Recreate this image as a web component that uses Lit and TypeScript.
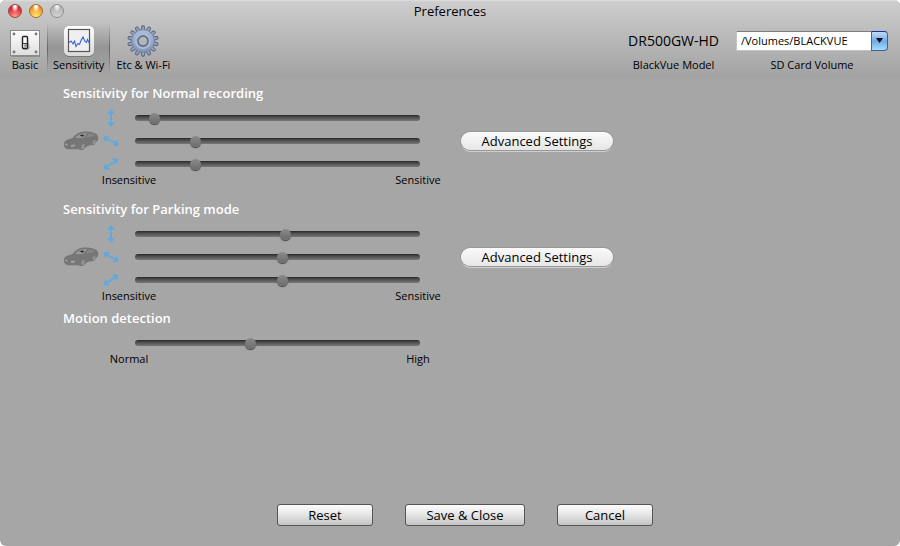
import { LitElement, html, css, svg } from "lit";
import { customElement, property } from "lit/decorators.js";

const switchIcon = svg`
  <svg class="icon" viewBox="0 0 32 32" aria-hidden="true">
    <defs>
      <linearGradient id="plate" x1="0" y1="0" x2="0" y2="1">
        <stop offset="0" stop-color="#fdfdfd" /><stop offset="1" stop-color="#dedede" />
      </linearGradient>
    </defs>
    <rect x="2" y="6" width="29" height="26" fill="#777" opacity=".6" />
    <rect x="1.5" y="5.5" width="29" height="25" fill="url(#plate)" stroke="#8a8a8a" />
    <g fill="#777">
      <circle cx="5" cy="9" r="1.4" /><circle cx="27" cy="9" r="1.4" />
      <circle cx="5" cy="27" r="1.4" /><circle cx="27" cy="27" r="1.4" />
    </g>
    <path d="M18 13l3 10-2 2h-5z" fill="#9a9a9a" opacity=".7" />
    <rect x="13.5" y="11.500" width="5" height="12" rx="1" fill="#fff" stroke="#222" stroke-width="1.4" />
    <path d="M15.500 18.500h2.500v4h-3z" fill="#999" />
    <path d="M14 18.500h4" stroke="#444" />
  </svg>`;

const chartIcon = svg`
  <svg class="icon" viewBox="0 0 32 32" aria-hidden="true">
    <defs>
      <linearGradient id="tile" x1="0" y1="0" x2="0" y2="1">
        <stop offset="0" stop-color="#ffffff" /><stop offset="1" stop-color="#d9d9d9" />
      </linearGradient>
    </defs>
    <rect x="1" y="2" width="30" height="30" rx="5" fill="#555" opacity=".5" />
    <rect x="1" y="1" width="30" height="30" rx="5" fill="url(#tile)" />
    <rect x="5.5" y="4.5" width="21" height="22" fill="#f0f0f2" stroke="#555" stroke-width="1.2" />
    <path d="M6 17.500l2-1.500 2 3 1.500-3L13 21.500l2-3 1.500 1 1.500-4 2-3.500 2 4.500 1.500 1 1-3 2 4"
      fill="none" stroke="#3b62dc" stroke-width="1.100" />
  </svg>`;

const teeth = Array.from({ length: 14 }, (_, i) => (i * 360) / 14);
const gearIcon = svg`
  <svg class="icon" viewBox="0 0 32 32" aria-hidden="true">
    <defs>
      <linearGradient id="steel" x1="0" y1="0" x2="0" y2="1">
        <stop offset="0" stop-color="#aebcd6" /><stop offset="1" stop-color="#8496b8" />
      </linearGradient>
    </defs>
    <g fill="#8f9fbd" stroke="#4c5a75" stroke-width=".8">
      ${teeth.map((a) => svg`<path d="M14 6l.8-5.200h2.400l.8 5.200z" transform="rotate(${a} 16 16)" />`)}
    </g>
    <circle cx="16" cy="16" r="11.200" fill="url(#steel)" stroke="#6d7d9c" stroke-width=".6" />
    <circle cx="16" cy="16" r="7.200" fill="none" stroke="#a9bad8" stroke-width="2" />
    <circle cx="16" cy="16" r="5" fill="#b5b5b5" stroke="#56657f" stroke-width="1.300" />
  </svg>`;

const carIcon = svg`
  <svg class="car" viewBox="0 0 36 20" aria-hidden="true">
    <path d="M1 14.500C.5 12 1.500 10 3.500 9l6-2C12 3.500 15 1.500 18 1c5-.8 9-.6 12 .5 3 .8 5 2.500 5.300 5 .2 2-.8 3.500-2.300 4.500l-2 3-3 .3-3.500 .8-2.500 2-2 2h-3l-1.500-.8L5 18.200c-2.500-.3-3.700-1.500-4-3.700z" fill="#767676" />
    <path d="M12 6.800C14 4.200 16.500 3 19 2.400l5-.3-3.500 4.700c-2.500.3-6 .6-8.500 0z" fill="#989898" />
    <path d="M22.500 6.500l2.800-4c2.500-.1 5 .5 6.500 1.700L30 5.500z" fill="#858585" />
    <path d="M16.500 4.200l3-.8 1.800 1-2 1.400z" fill="#2e2e2e" />
    <path d="M2 12.500l2 .4 1 1.600-3-.4zM8 14l4.500-.5-1 2-3.500.4z" fill="#a2a2a2" />
    <ellipse cx="20" cy="15.500" rx="1.600" ry="2.800" fill="#929292" transform="rotate(20 20 15.500)" />
    <ellipse cx="31" cy="11" rx="1.300" ry="2.400" fill="#929292" transform="rotate(20 31 11)" />
  </svg>`;

const arrowIcon = (angle: number) => svg`
  <svg class="arrow" viewBox="0 0 18 18" aria-hidden="true">
    <path d="M9 2v14M6 4.800L9 1.500l3 3.300M6 13.200l3 3.300 3-3.300" transform="rotate(${angle} 9 9)"
      fill="none" stroke="#5aa9e2" stroke-width="1.600" />
  </svg>`;

interface Axis {
  name: string;
  angle: number;
  value: number;
}

@customElement("sensitivity-group")
export class SensitivityGroup extends LitElement {
  @property() heading = "";
  @property() low = "";
  @property() high = "";
  @property({ type: Boolean }) advanced = false;
  @property({ attribute: false }) axes: Axis[] = [];

  static styles = css`
    :host {
      display: block;
    }
    .heading {
      margin: 0;
      font-size: 13px;
      line-height: 16px;
      font-weight: 600;
      color: #fff;
    }
    .body {
      display: grid;
      grid-template-columns: 36px minmax(180px, 321px) 193px;
      align-items: center;
      padding-top: 7px;
    }
    .car {
      display: block;
      width: 36px;
      height: 20px;
    }
    .rows {
      display: flex;
      flex-direction: column;
      gap: 4px;
    }
    .row {
      display: flex;
      align-items: center;
      height: 19px;
    }
    .mark {
      flex: none;
      display: flex;
      justify-content: center;
      width: 24px;
      margin-right: 12px;
    }
    .arrow {
      width: 18px;
      height: 18px;
    }
    .slider {
      appearance: none;
      flex: 1;
      min-width: 0;
      height: 12px;
      margin: 0;
      background: transparent;
    }
    .slider::-webkit-slider-runnable-track {
      height: 6px;
      border-radius: 3px;
      background: linear-gradient(#262626, #4c4c4c 35%, #787878);
    }
    .slider::-webkit-slider-thumb {
      appearance: none;
      width: 11px;
      height: 11px;
      margin-top: -2px;
      border-radius: 50%;
      background: linear-gradient(#8a8a8a, #6c6c6c);
      box-shadow: 0 1px 1px #444;
    }
    .advanced {
      justify-self: end;
      width: 152px;
      height: 18px;
      padding: 0;
      border: 0;
      border-radius: 9px;
      background: linear-gradient(#fafafa, #e6e6e6);
      box-shadow: 0 0 0 1px #989898, 0 2px 0 #cfcfcf;
      font: inherit;
      font-size: 13px;
      line-height: 18px;
      color: #000;
    }
    .scale {
      display: flex;
      justify-content: space-between;
      max-width: 347px;
      margin-top: 1px;
      padding-left: 37px;
      font-size: 11px;
      line-height: 12px;
    }
    .end {
      width: 58px;
      text-align: center;
    }
  `;

  render() {
    return html`
      <h2 class="heading">${this.heading}</h2>
      <div class="body">
        <div>${this.advanced ? carIcon : ""}</div>
        <div class="rows">
          ${this.axes.map(
            (axis) => html`<label class="row">
              <span class="mark">${this.advanced ? arrowIcon(axis.angle) : ""}</span>
              <input class="slider" type="range" min="0" max="1000" aria-label=${axis.name} .value=${String(axis.value)} />
            </label>`
          )}
        </div>
        ${this.advanced ? html`<button class="advanced" type="button">Advanced Settings</button>` : ""}
      </div>
      <div class="scale"><span class="end">${this.low}</span><span class="end">${this.high}</span></div>
    `;
  }
}

@customElement("app-root")
export class AppRoot extends LitElement {
  static styles = css`
    :host {
      display: flex;
      flex-direction: column;
      box-sizing: border-box;
      min-height: 100vh;
      border-radius: 6px;
      background: #a6a6a6;
      color: #000;
      font-family: "Open Sans", "Noto Sans", sans-serif;
      font-size: 13px;
    }
    .header {
      border-radius: 6px 6px 0 0;
      background: linear-gradient(#dedede, #cdcdcd 2px, #a3a3a3 76px, #a6a6a6);
    }
    .titlebar {
      display: grid;
      grid-template-columns: 72px 1fr 72px;
      align-items: center;
      height: 22px;
    }
    .lights {
      display: flex;
      gap: 7px;
      padding-left: 8px;
    }
    .light {
      width: 14px;
      height: 14px;
      padding: 0;
      border: 1px solid #8f8f8f;
      border-radius: 50%;
      background: radial-gradient(ellipse at 50% 10%, #f4f4f4 8%, transparent 40%), linear-gradient(#a8a8a8, #d4d4d4);
    }
    .close {
      border-color: #9b4343;
      background: radial-gradient(ellipse at 50% 8%, #fff 10%, transparent 42%), radial-gradient(circle at 50% 100%, #ffa8a0, #e33437 60%, #b01a20);
    }
    .minimize {
      border-color: #a66a2c;
      background: radial-gradient(ellipse at 50% 8%, #fff 10%, transparent 42%), radial-gradient(circle at 50% 100%, #fff07c, #f3a32f 60%, #c56a18);
    }
    .title {
      margin: 0;
      font-size: 13px;
      line-height: 22px;
      font-weight: 400;
      text-align: center;
    }
    .toolbar {
      display: flex;
      justify-content: space-between;
      align-items: flex-start;
      height: 58px;
      padding: 0 12px 0 3px;
    }
    .tabs {
      display: flex;
    }
    .tab {
      display: flex;
      flex-direction: column;
      align-items: center;
      height: 52px;
      padding: 3px 6px 0;
      border: 0;
      background: none;
      font: inherit;
      font-size: 11px;
      line-height: 16px;
      color: #000;
      white-space: nowrap;
    }
    .selected {
      background:
        linear-gradient(transparent, #0005 50%, transparent) left / 1px 100% no-repeat,
        linear-gradient(transparent, #0005 50%, transparent) right / 1px 100% no-repeat,
        linear-gradient(transparent, #0000002b 50%, transparent);
    }
    .icon {
      width: 32px;
      height: 32px;
    }
    .status {
      display: flex;
      gap: 17px;
      padding-top: 9px;
    }
    .field {
      display: flex;
      flex-direction: column;
      align-items: center;
      gap: 7px;
      font-size: 11px;
      line-height: 14px;
    }
    .model {
      font-size: 14px;
      line-height: 20px;
    }
    .combo {
      position: relative;
      display: block;
      width: 152px;
      height: 20px;
    }
    .volume {
      appearance: none;
      width: 100%;
      height: 20px;
      padding: 0 20px 0 4px;
      border: 1px solid #c4c4c4;
      border-top-color: #7d7d7d;
      border-radius: 0 4px 4px 0;
      background: #fff;
      color: #000;
      font: inherit;
      font-size: 11px;
    }
    .drop {
      position: absolute;
      top: 0;
      right: 0;
      box-sizing: border-box;
      width: 17px;
      height: 20px;
      border: 1px solid #3d5fa8;
      border-top-color: #20309a;
      border-radius: 0 4px 4px 0;
      background: linear-gradient(#c4dcf6, #6fa9e8 50%, #a8dcfa);
      pointer-events: none;
    }
    .content {
      flex: 1;
      display: flex;
      flex-direction: column;
      padding: 5px 63px 0;
    }
    .parking {
      margin-top: 15px;
    }
    .motion {
      margin-top: 8px;
    }
    .actions {
      display: flex;
      justify-content: center;
      gap: 32px;
      padding: 20px 0 20px 30px;
    }
    .action {
      box-sizing: border-box;
      width: 96px;
      height: 22px;
      padding: 0;
      border: 1px solid #555;
      border-radius: 3px;
      background: linear-gradient(#fdfdfd, #e4e4e4 50%, #c4c4c4);
      font: inherit;
      font-size: 13px;
      line-height: 20px;
      color: #000;
    }
    .wide {
      width: 120px;
    }
  `;

  private normal: Axis[] = [
    { name: "Vertical", angle: 0, value: 51 },
    { name: "Lateral", angle: -62, value: 202 },
    { name: "Longitudinal", angle: 55, value: 202 },
  ];

  private parking: Axis[] = [
    { name: "Vertical", angle: 0, value: 531 },
    { name: "Lateral", angle: -62, value: 520 },
    { name: "Longitudinal", angle: 55, value: 520 },
  ];

  private motion: Axis[] = [{ name: "Motion detection", angle: 0, value: 400 }];

  render() {
    return html`
      <header class="header">
        <div class="titlebar">
          <div class="lights">
            <button class="light close" type="button" aria-label="Close"></button>
            <button class="light minimize" type="button" aria-label="Minimize"></button>
            <button class="light" type="button" aria-label="Zoom"></button>
          </div>
          <h1 class="title">Preferences</h1>
        </div>
        <div class="toolbar">
          <nav class="tabs">
            <button class="tab" type="button">${switchIcon}<span>Basic</span></button>
            <button class="tab selected" type="button" aria-current="page">${chartIcon}<span>Sensitivity</span></button>
            <button class="tab" type="button">${gearIcon}<span>Etc &amp; Wi-Fi</span></button>
          </nav>
          <div class="status">
            <div class="field"><span class="model">DR500GW-HD</span><span>BlackVue Model</span></div>
            <div class="field">
              <span class="combo">
                <select class="volume" id="volume">
                  <option>/Volumes/BLACKVUE</option>
                </select>
                <svg class="drop" viewBox="0 0 15 18" aria-hidden="true"><path d="M4 6h7l-3.500 5z" fill="#111" /></svg>
              </span>
              <label for="volume">SD Card Volume</label>
            </div>
          </div>
        </div>
      </header>
      <main class="content">
        <sensitivity-group heading="Sensitivity for Normal recording" low="Insensitive" high="Sensitive" advanced .axes=${this.normal}></sensitivity-group>
        <sensitivity-group class="parking" heading="Sensitivity for Parking mode" low="Insensitive" high="Sensitive" advanced .axes=${this.parking}></sensitivity-group>
        <sensitivity-group class="motion" heading="Motion detection" low="Normal" high="High" .axes=${this.motion}></sensitivity-group>
      </main>
      <footer class="actions">
        <button class="action" type="button">Reset</button>
        <button class="action wide" type="button">Save &amp; Close</button>
        <button class="action" type="button">Cancel</button>
      </footer>
    `;
  }
}
